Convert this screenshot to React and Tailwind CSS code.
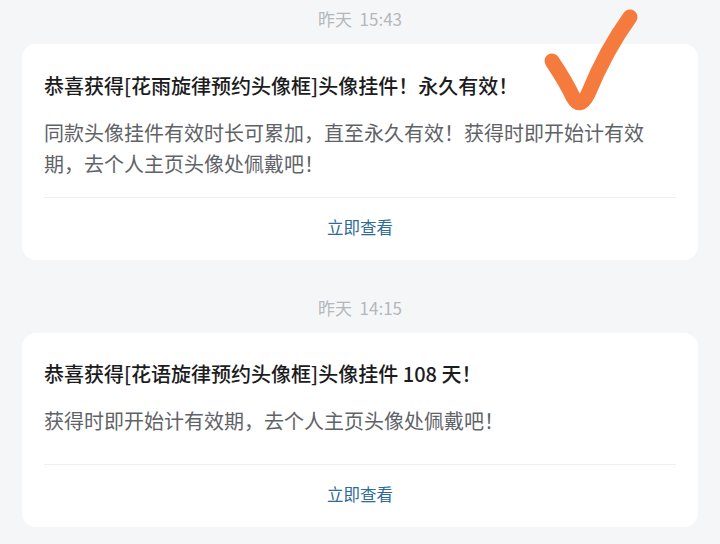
export default function App() {
  const font = { fontFamily: '"Noto Sans CJK SC", "Noto Sans", sans-serif' };
  return (
    <div className="relative w-[720px] h-[544px] overflow-hidden bg-[#f5f6f8]" style={font}>
      <div className="flex flex-col pt-[7px] px-[22px] gap-[36px]">
        <div className="flex flex-col gap-[13px]">
          <div className="h-[24px] leading-[24px] text-center text-[17px] text-[#b4b7bc]">昨天&nbsp;&nbsp;15:43</div>
          <div className="bg-white rounded-[14px] px-[22px] pt-[28px] pb-[20px]">
            <div className="text-[20px] leading-[28px] font-medium text-[#1c1c1e]">恭喜获得[花雨旋律预约头像框]头像挂件！永久有效！</div>
            <div className="mt-[17px] w-[612px] text-[20px] leading-[31px] text-[#5f6368]">同款头像挂件有效时长可累加，直至永久有效！获得时即开始计有效期，去个人主页头像处佩戴吧！</div>
            <div className="mt-[18px] h-px bg-[#efeff1]"></div>
            <div className="pt-[17px] h-[42px] leading-[24px] text-center text-[16.5px] text-[#2d6a98]">立即查看</div>
          </div>
        </div>
        <div className="flex flex-col gap-[13px]">
          <div className="h-[24px] leading-[24px] text-center text-[17px] text-[#b4b7bc]">昨天&nbsp;&nbsp;14:15</div>
          <div className="bg-white rounded-[14px] px-[22px] pt-[27px] pb-[20px]">
            <div className="text-[20px] leading-[28px] font-medium text-[#1c1c1e]">恭喜获得[花语旋律预约头像框]头像挂件 108 天！</div>
            <div className="mt-[17px] text-[20px] leading-[31px] text-[#5f6368]">获得时即开始计有效期，去个人主页头像处佩戴吧！</div>
            <div className="mt-[28px] h-px bg-[#efeff1]"></div>
            <div className="pt-[17px] h-[42px] leading-[24px] text-center text-[16.5px] text-[#2d6a98]">立即查看</div>
          </div>
        </div>
      </div>
      <svg className="absolute left-0 top-0" width="720" height="544" viewBox="0 0 720 544">
        <path d="M552 61 Q 566 82 573 97 Q 580 110 588 94 Q 606 50 630 17" fill="none" stroke="#f47a3e" strokeWidth="15" strokeLinecap="round" strokeLinejoin="round" />
      </svg>
    </div>
  );
}
